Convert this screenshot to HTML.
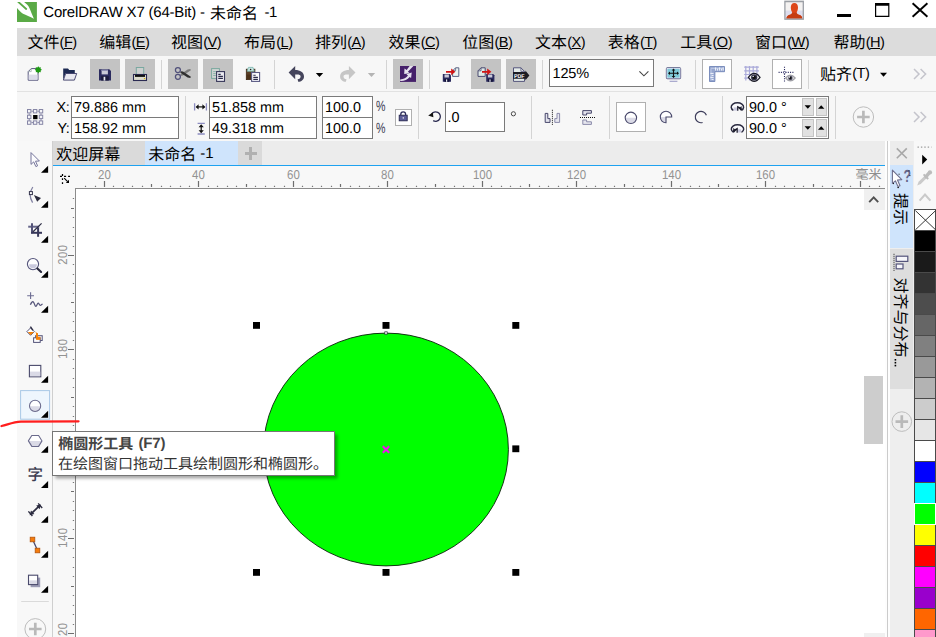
<!DOCTYPE html><html lang="zh"><head><meta charset="utf-8"><title>CorelDRAW X7 (64-Bit)</title>
<style>
html,body{margin:0;padding:0;background:#fff;}
body{width:936px;height:637px;overflow:hidden;position:relative;
 font-family:"Liberation Sans",sans-serif;text-rendering:geometricPrecision;-webkit-font-smoothing:antialiased;}
#app{position:absolute;left:0;top:0;width:936px;height:637px;overflow:hidden;background:#fff;}
.a{position:absolute;}
.t{position:absolute;margin-top:0.9px;white-space:pre;line-height:1.15;font-family:"Liberation Sans",sans-serif;}
.t u{text-decoration:underline;text-underline-offset:1px;text-decoration-thickness:1px;}
svg{position:absolute;left:0;top:0;overflow:visible;text-rendering:geometricPrecision;}
.h{position:absolute;white-space:pre;line-height:1;color:transparent;font-family:"Liberation Sans",sans-serif;overflow:hidden;max-width:300px;max-height:120px;}
svg.cjk text{font-family:"Liberation Sans","Noto Sans CJK SC",sans-serif;}
</style></head><body><div id="app">
<span class="t " style="left:43.3px;top:2.7px;font-size:15px;color:#000;letter-spacing:-0.2px;">CorelDRAW X7 (64-Bit) -</span>
<span class="t " style="left:264.6px;top:2.7px;font-size:15px;color:#000;letter-spacing:-0.5px;">-1</span>
<div class="a " style="left:17px;top:28px;width:919px;height:28px;background:#dcdcdc;"></div>
<span class="t " style="left:59.6px;top:33.8px;font-size:14.6px;color:#000;letter-spacing:-0.55px;">(<u>F</u>)</span>
<span class="t " style="left:131.4px;top:33.8px;font-size:14.6px;color:#000;letter-spacing:-0.55px;">(<u>E</u>)</span>
<span class="t " style="left:203.2px;top:33.8px;font-size:14.6px;color:#000;letter-spacing:-0.55px;">(<u>V</u>)</span>
<span class="t " style="left:276.3px;top:33.8px;font-size:14.6px;color:#000;letter-spacing:-0.55px;">(<u>L</u>)</span>
<span class="t " style="left:347.3px;top:33.8px;font-size:14.6px;color:#000;letter-spacing:-0.55px;">(<u>A</u>)</span>
<span class="t " style="left:420.7px;top:33.8px;font-size:14.6px;color:#000;letter-spacing:-0.55px;">(<u>C</u>)</span>
<span class="t " style="left:494.5px;top:33.8px;font-size:14.6px;color:#000;letter-spacing:-0.55px;">(<u>B</u>)</span>
<span class="t " style="left:567.3px;top:33.8px;font-size:14.6px;color:#000;letter-spacing:-0.55px;">(<u>X</u>)</span>
<span class="t " style="left:639.9px;top:33.8px;font-size:14.6px;color:#000;letter-spacing:-0.55px;">(<u>T</u>)</span>
<span class="t " style="left:712.5px;top:33.8px;font-size:14.6px;color:#000;letter-spacing:-0.55px;">(<u>O</u>)</span>
<span class="t " style="left:787.3px;top:33.8px;font-size:14.6px;color:#000;letter-spacing:-0.55px;">(<u>W</u>)</span>
<span class="t " style="left:865.8px;top:33.8px;font-size:14.6px;color:#000;letter-spacing:-0.55px;">(<u>H</u>)</span>
<div class="a " style="left:17px;top:56px;width:919px;height:35.5px;background:#f7f7f7;"></div>
<div class="a " style="left:17px;top:91px;width:919px;height:1px;background:#e2e2e2;"></div>
<div class="a " style="left:90px;top:59px;width:30px;height:30px;background:#c3c3c3;"></div>
<div class="a " style="left:125px;top:59px;width:30px;height:30px;background:#c3c3c3;"></div>
<div class="a " style="left:168px;top:59px;width:30px;height:30px;background:#c3c3c3;"></div>
<div class="a " style="left:203px;top:59px;width:30px;height:30px;background:#c3c3c3;"></div>
<div class="a " style="left:393px;top:59px;width:30px;height:30px;background:#c3c3c3;"></div>
<div class="a " style="left:471px;top:59px;width:30px;height:30px;background:#c3c3c3;"></div>
<div class="a " style="left:506px;top:59px;width:30px;height:30px;background:#c3c3c3;"></div>
<div class="a " style="left:161px;top:60px;width:1px;height:29px;background:#d4d4d4;"></div>
<div class="a " style="left:273.8px;top:60px;width:1px;height:29px;background:#d4d4d4;"></div>
<div class="a " style="left:386.2px;top:60px;width:1px;height:29px;background:#d4d4d4;"></div>
<div class="a " style="left:428.9px;top:60px;width:1px;height:29px;background:#d4d4d4;"></div>
<div class="a " style="left:541.8px;top:60px;width:1px;height:29px;background:#d4d4d4;"></div>
<div class="a " style="left:694.9px;top:60px;width:1px;height:29px;background:#d4d4d4;"></div>
<div class="a " style="left:807.9px;top:60px;width:1px;height:29px;background:#d4d4d4;"></div>
<div class="a " style="left:549px;top:59px;width:105px;height:28px;background:#fff;border:1px solid #7a7a7a;box-sizing:border-box;"></div>
<span class="t " style="left:552.6px;top:65.2px;font-size:14.5px;color:#000;letter-spacing:-0.2px;">125%</span>
<div class="a " style="left:702px;top:59px;width:30px;height:29.5px;background:#fff;border:1px solid #b0b0b0;box-sizing:border-box;"></div>
<div class="a " style="left:772px;top:59px;width:30px;height:29.5px;background:#fff;border:1px solid #b0b0b0;box-sizing:border-box;"></div>
<span class="t " style="left:852.3px;top:65.6px;font-size:14.6px;color:#000;letter-spacing:-0.55px;">(T)</span>
<div class="a " style="left:17px;top:92px;width:919px;height:49px;background:#f7f7f7;"></div>
<div class="a " style="left:184.9px;top:96px;width:1px;height:43px;background:#d4d4d4;"></div>
<div class="a " style="left:418px;top:96px;width:1px;height:43px;background:#d4d4d4;"></div>
<div class="a " style="left:531.2px;top:96px;width:1px;height:43px;background:#d4d4d4;"></div>
<div class="a " style="left:608.8px;top:96px;width:1px;height:43px;background:#d4d4d4;"></div>
<div class="a " style="left:721.9px;top:96px;width:1px;height:43px;background:#d4d4d4;"></div>
<div class="a " style="left:835.1px;top:96px;width:1px;height:43px;background:#d4d4d4;"></div>
<span class="t " style="left:56.6px;top:99.3px;font-size:14.4px;color:#000;letter-spacing:-0.4px;">X:</span>
<span class="t " style="left:57.4px;top:120.3px;font-size:14.4px;color:#000;letter-spacing:-0.4px;">Y:</span>
<div class="a " style="left:71px;top:96px;width:108px;height:22px;background:#fff;border:1px solid #7a7a7a;box-sizing:border-box;"></div>
<span class="t " style="left:74.1px;top:99.3px;font-size:14.4px;color:#000;">79.886 mm</span>
<div class="a " style="left:71px;top:117px;width:108px;height:22px;background:#fff;border:1px solid #7a7a7a;box-sizing:border-box;"></div>
<span class="t " style="left:74.1px;top:120.3px;font-size:14.4px;color:#000;">158.92 mm</span>
<div class="a " style="left:209px;top:96px;width:108px;height:22px;background:#fff;border:1px solid #7a7a7a;box-sizing:border-box;"></div>
<span class="t " style="left:212.1px;top:99.3px;font-size:14.4px;color:#000;">51.858 mm</span>
<div class="a " style="left:209px;top:117px;width:108px;height:22px;background:#fff;border:1px solid #7a7a7a;box-sizing:border-box;"></div>
<span class="t " style="left:212.1px;top:120.3px;font-size:14.4px;color:#000;">49.318 mm</span>
<div class="a " style="left:322px;top:96px;width:51px;height:22px;background:#fff;border:1px solid #7a7a7a;box-sizing:border-box;"></div>
<span class="t " style="left:325.1px;top:99.3px;font-size:14.4px;color:#000;">100.0</span>
<div class="a " style="left:322px;top:117px;width:51px;height:22px;background:#fff;border:1px solid #7a7a7a;box-sizing:border-box;"></div>
<span class="t " style="left:325.1px;top:120.3px;font-size:14.4px;color:#000;">100.0</span>
<span class="t " style="left:376.3px;top:98.3px;font-size:14.8px;color:#3a3a50;transform:scaleX(0.72);transform-origin:0 0;">%</span>
<span class="t " style="left:376.3px;top:120.3px;font-size:14.8px;color:#3a3a50;transform:scaleX(0.72);transform-origin:0 0;">%</span>
<div class="a " style="left:395px;top:109px;width:17px;height:17px;background:#fff;border:1px solid #b0b0b0;box-sizing:border-box;"></div>
<div class="a " style="left:445px;top:102px;width:60px;height:30px;background:#fff;border:1px solid #7a7a7a;box-sizing:border-box;"></div>
<span class="t " style="left:447.4px;top:109.4px;font-size:14.4px;color:#000;">.0</span>
<div class="a " style="left:616px;top:102px;width:30px;height:30px;background:#fff;border:1px solid #b0b0b0;box-sizing:border-box;"></div>
<div class="a " style="left:746px;top:96px;width:83px;height:22px;background:#fff;border:1px solid #7a7a7a;box-sizing:border-box;"></div>
<span class="t " style="left:749.1px;top:99.3px;font-size:14.4px;color:#000;">90.0 °</span>
<div class="a " style="left:746px;top:117px;width:83px;height:22px;background:#fff;border:1px solid #7a7a7a;box-sizing:border-box;"></div>
<span class="t " style="left:749.1px;top:120.3px;font-size:14.4px;color:#000;">90.0 °</span>
<div class="a " style="left:802px;top:98px;width:11.5px;height:18px;background:#e1e1e1;border:1px solid #c4c4c4;box-sizing:border-box;"></div>
<div class="a " style="left:815.5px;top:98px;width:11.5px;height:18px;background:#e1e1e1;border:1px solid #c4c4c4;box-sizing:border-box;"></div>
<div class="a " style="left:802px;top:119px;width:11.5px;height:18px;background:#e1e1e1;border:1px solid #c4c4c4;box-sizing:border-box;"></div>
<div class="a " style="left:815.5px;top:119px;width:11.5px;height:18px;background:#e1e1e1;border:1px solid #c4c4c4;box-sizing:border-box;"></div>
<div class="a " style="left:17px;top:141px;width:35.5px;height:496px;background:#f8f8f8;"></div>
<div class="a " style="left:52px;top:141px;width:1px;height:496px;background:#cfcfcf;"></div>
<div class="a " style="left:53px;top:141px;width:832px;height:24px;background:#ececec;"></div>
<div class="a " style="left:53px;top:141px;width:91.5px;height:24px;background:#dadada;"></div>
<div class="a " style="left:144.5px;top:141px;width:93.5px;height:24px;background:#cfe4fc;"></div>
<div class="a " style="left:238px;top:141px;width:23.5px;height:24px;background:#dadada;"></div>
<span class="t " style="left:200.2px;top:144.3px;font-size:15px;color:#000;">-1</span>
<div class="a " style="left:244.5px;top:152px;width:12.5px;height:2.6px;background:#b0b0b0;"></div>
<div class="a " style="left:249.4px;top:147px;width:2.6px;height:12.5px;background:#b0b0b0;"></div>
<div class="a " style="left:53px;top:165.5px;width:832px;height:22.7px;background:#f8f8f8;"></div>
<div class="a " style="left:53px;top:188px;width:22.5px;height:449px;background:#f8f8f8;"></div>
<div class="a " style="left:53px;top:164.8px;width:832px;height:1.4px;background:#1ea2f0;"></div>
<div class="a " style="left:75px;top:188px;width:789px;height:449px;background:#fff;"></div>
<div class="a " style="left:75px;top:187.9px;width:810px;height:1.2px;background:#8c8c8c;"></div>
<div class="a " style="left:75px;top:188px;width:1px;height:449px;background:#8c8c8c;"></div>
<div class="a " style="left:864px;top:189px;width:20.5px;height:448px;background:#fff;"></div>
<div class="a " style="left:864px;top:189px;width:20.5px;height:20.5px;background:#f0f0f0;"></div>
<div class="a " style="left:864px;top:376px;width:19px;height:67.5px;background:#cdcdcd;"></div>
<div class="a " style="left:864px;top:633px;width:20.5px;height:4px;background:#f0f0f0;"></div>
<div class="a " style="left:885px;top:141px;width:51px;height:496px;background:#f8f8f8;"></div>
<div class="a " style="left:885px;top:141px;width:5px;height:496px;background:#fdfdfd;"></div>
<div class="a " style="left:887px;top:141px;width:1px;height:496px;background:#cbcbcb;"></div>
<div class="a " style="left:890px;top:141px;width:24px;height:496px;background:#eeeeee;"></div>
<div class="a " style="left:890px;top:141px;width:23px;height:24px;background:#ececec;"></div>
<div class="a " style="left:890px;top:165px;width:23px;height:83px;background:#cfe4fc;"></div>
<div class="a " style="left:890px;top:248.5px;width:23px;height:140px;background:#dedede;"></div>
<div class="a " style="left:914px;top:209px;width:22px;height:428px;background:#4a4a4a;"></div>
<div class="a " style="left:915.1px;top:210.3px;width:19.9px;height:20px;background:#fff;"></div>
<div class="a " style="left:915.1px;top:231.3px;width:19.9px;height:20px;background:#000000;"></div>
<div class="a " style="left:915.1px;top:252.3px;width:19.9px;height:20px;background:#1a1a1a;"></div>
<div class="a " style="left:915.1px;top:273.3px;width:19.9px;height:20px;background:#333333;"></div>
<div class="a " style="left:915.1px;top:294.3px;width:19.9px;height:20px;background:#4d4d4d;"></div>
<div class="a " style="left:915.1px;top:315.3px;width:19.9px;height:20px;background:#666666;"></div>
<div class="a " style="left:915.1px;top:336.3px;width:19.9px;height:20px;background:#808080;"></div>
<div class="a " style="left:915.1px;top:357.3px;width:19.9px;height:20px;background:#999999;"></div>
<div class="a " style="left:915.1px;top:378.3px;width:19.9px;height:20px;background:#b3b3b3;"></div>
<div class="a " style="left:915.1px;top:399.3px;width:19.9px;height:20px;background:#cccccc;"></div>
<div class="a " style="left:915.1px;top:420.3px;width:19.9px;height:20px;background:#e6e6e6;"></div>
<div class="a " style="left:915.1px;top:441.3px;width:19.9px;height:20px;background:#ffffff;"></div>
<div class="a " style="left:915.1px;top:462.3px;width:19.9px;height:20px;background:#0000ff;"></div>
<div class="a " style="left:915.1px;top:483.3px;width:19.9px;height:20px;background:#00ffff;"></div>
<div class="a " style="left:915.1px;top:504.3px;width:19.9px;height:20px;background:#00ff00;"></div>
<div class="a " style="left:913.8px;top:503.3px;width:22.2px;height:21.6px;box-sizing:border-box;border:1.3px solid #fff;"></div>
<div class="a " style="left:915.1px;top:525.3px;width:19.9px;height:20px;background:#ffff00;"></div>
<div class="a " style="left:915.1px;top:546.3px;width:19.9px;height:20px;background:#ff0000;"></div>
<div class="a " style="left:915.1px;top:567.3px;width:19.9px;height:20px;background:#ff00ff;"></div>
<div class="a " style="left:915.1px;top:588.3px;width:19.9px;height:20px;background:#9900cc;"></div>
<div class="a " style="left:915.1px;top:609.3px;width:19.9px;height:20px;background:#ff6600;"></div>
<div class="a " style="left:915.1px;top:630.3px;width:19.9px;height:20px;background:#ff99cc;"></div>
<svg width="936" height="637" viewBox="0 0 936 637"><svg x="17" y="2" width="19.9" height="20" overflow="hidden" style="overflow:hidden"><rect width="19.9" height="20" fill="#5aaa46"/><path d="M0 0 L7.1 0 C9.6 1.8 11.4 3.8 12.4 5.9 C13.6 8.6 15.2 12.6 16.9 16.8 C13 14.8 9 13.2 6 11.8 C3.6 10.2 1.8 8.2 0 6.1z" fill="#fff"/><path d="M1.2 -0.2 L9.2 7" stroke="#5aaa46" stroke-width="1.8" stroke-linecap="round"/></svg>
<rect x="784.9" y="1.6" width="18.4" height="17.6" fill="#f4f2f1"/><rect x="784.9" y="10.5" width="18.4" height="8.7" fill="#dddded"/><path d="M794.4 3 C796.8 3 798 5 798 7.4 C798 9.6 797.2 11.4 796.6 12.2 C796.6 13.6 797.4 14.2 799 14.8 C800.8 15.4 802 16.4 802.4 18.4 L786.4 18.4 C786.8 16.4 788 15.4 789.8 14.8 C791.4 14.2 792.2 13.6 792.2 12.2 C791.6 11.4 790.8 9.6 790.8 7.4 C790.8 5 792 3 794.4 3z" fill="#dd4719"/><path d="M792.2 12.2 C792.2 13.6 791.4 14.2 789.8 14.8 C788 15.4 786.8 16.4 786.4 18.4 L802.4 18.4 C802 16.4 800.8 15.4 799 14.8 C797.4 14.2 796.6 13.6 796.6 12.2 C795.4 13 793.4 13 792.2 12.2z" fill="#c53d12"/><rect x="784.9" y="1.6" width="18.4" height="17.6" fill="none" stroke="#9b9fa5" stroke-width="1.3"/><rect x="784.3" y="0" width="19.6" height="1" fill="#dadbdc"/>
<rect x="837" y="14" width="14" height="3" fill="#000"/><path d="M875 3 h14.4 v14 h-14.4z M876.2 5.8 v10 h12 v-10z" fill="#000" fill-rule="evenodd"/><path d="M912.6 3.2 L927.4 16.8 M927.4 3.2 L912.6 16.8" stroke="#000" stroke-width="1.9" fill="none"/>
<path d="M31.2 68.6 h6.8 v11.6 h-9.8 v-8.6z" fill="#fff" stroke="#55557c" stroke-width="1"/><path d="M28.7 74.6 h8.8 v5.1 h-8.8z" fill="#dcdce9"/><path d="M31.2 68.6 v3 h-3" fill="none" stroke="#9aa" stroke-width="0.8"/><path d="M38.3 66.3 L38.30 66.20 L39.26 67.49 L40.85 67.25 L40.61 68.84 L41.90 69.80 L40.61 70.76 L40.85 72.35 L39.26 72.11 L38.30 73.40 L37.34 72.11 L35.75 72.35 L35.99 70.76 L34.70 69.80 L35.99 68.84 L35.75 67.25 L37.34 67.49z" fill="#1f9a14"/><path d="M63.2 80 v-11.6 h4.8 l1.2 1.7 h5.6 v3.6 h-9.4z" fill="#1d2a52"/><path d="M63.4 80.1 l2.3 -6.6 h11 l-2.3 6.6z" fill="#e9e9f1" stroke="#3a3a66" stroke-width="0.9"/><g transform="translate(99 69.2)" transform-origin="0 0"><path d="M0 0 h10.3 l1.7 1.7 v9.7 h-12z" fill="#2a2a5e"/><rect x="2.6" y="0.6" width="6.3" height="4.6" fill="#c9c9d8"/><rect x="2.6" y="0.6" width="6.3" height="1.2" fill="#8d8db2"/><rect x="2.2" y="7" width="7.6" height="4.4" fill="#1b1b3c"/><rect x="4.6" y="7.6" width="1.7" height="3.8" fill="#e8e8f0"/></g><rect x="136.3" y="67.5" width="7.4" height="7.6" fill="#cdcfce" stroke="#7aa8a0"/><rect x="133.5" y="74.5" width="13" height="6" fill="#dcdccd" stroke="#2a2a52" stroke-width="1.1"/><rect x="135" y="74.9" width="10" height="2" fill="#111"/><rect x="143.9" y="78" width="1.3" height="1.1" fill="#d8b000"/><path d="M180.4 74.4 L187.6 69.6 L190.3 69 L190.9 70.2 L183 75.6 L180.6 75.9z" fill="#7c7c7c"/><path d="M180.6 71.2 L183 71.5 L190.9 76.7 L190.3 77.9 L187.6 77.6 L180.4 72.8z" fill="#303030"/><circle cx="177.9" cy="70" r="2.5" fill="none" stroke="#50507a" stroke-width="1.25"/><circle cx="177.9" cy="76.8" r="2.5" fill="none" stroke="#50507a" stroke-width="1.25"/><rect x="211.6" y="68.6" width="7.8" height="9.8" fill="#d2d4d3" stroke="#7aa89e"/><path d="M213.2 71.6 h2.6 M213.2 73.6 h2.6 M213.2 75.5 h2.6" stroke="#86b2a8" stroke-width="1"/><rect x="216.6" y="71.6" width="7.9" height="9.8" fill="#ececf2" stroke="#38385a" stroke-width="1.1"/><path d="M218.3 74.3 h2.4 M218.3 76.4 h4.6 M218.3 78.4 h4.6" stroke="#2a2a48" stroke-width="1.15"/><rect x="246.3" y="69.2" width="8.6" height="10.4" fill="#5b3f27" stroke="#3e2815" stroke-width="0.8"/><rect x="246.7" y="74.6" width="7.8" height="4.6" fill="#4c3119"/><path d="M247.2 71.2 L248.4 67.4 L253 67.4 L254.2 71.2z" fill="#c9e6e2" stroke="#7ab6ae" stroke-width="0.8"/><circle cx="250.6" cy="69.5" r="0.8" fill="#222"/><rect x="251.6" y="72.5" width="8" height="8.9" fill="#fdfdff" stroke="#5a5a84" stroke-width="1.1"/><path d="M253.3 75.2 h2.4 M253.3 77.3 h4.6 M253.3 79.3 h4.6" stroke="#2a2a48" stroke-width="1.15"/><g transform="translate(288.6 66)" ><path d="M0 6.6 L6.6 0 L6.6 4 C11.5 4 15.4 6.4 15.4 10.4 C15.4 13.6 12.8 15.6 9.6 15.7 L9 13.3 C10.9 13.1 12 12.1 12 10.5 C12 8.8 10.2 8.4 6.6 8.6 L6.6 13.2z" fill="#45455c"/></g><path d="M315.8 72.9 h7.4 l-3.7 4.2 z" fill="#000"/><g transform="translate(695.9 0) scale(-1 1)"><g transform="translate(340.4 66)" ><path d="M0 6.6 L6.6 0 L6.6 4 C11.5 4 15.4 6.4 15.4 10.4 C15.4 13.6 12.8 15.6 9.6 15.7 L9 13.3 C10.9 13.1 12 12.1 12 10.5 C12 8.8 10.2 8.4 6.6 8.6 L6.6 13.2z" fill="#c6c6c6"/></g></g><path d="M367.8 72.9 h7.4 l-3.7 4.2 z" fill="#b4b4b4"/><rect x="400" y="66" width="16" height="15.9" fill="#45206a"/><path d="M413.4 66 L409.6 66 L406.7 70.1 L404.5 68.4 L404.2 74 L409.8 73.2 L407.9 71.7z" fill="#e6e2ee"/><path d="M400.2 79.4 C403.8 79.2 406.4 77.8 408 75.6 L406.4 74.3 L411.7 72.6 L411.1 78.1 L409.6 76.9 C407.4 79.9 403.6 81.2 400.2 80.9z" fill="#e6e2ee"/><path d="M455.6 67.8 h3.2 v8.6 h-6.2 v-5.6 z" fill="#eaf4f2" stroke="#5c6484" stroke-width="1"/><path d="M455.6 67.8 v3 h-3" fill="none" stroke="#5c6484" stroke-width="0.8"/><g transform="translate(442.8 74)" ><path d="M0 0 h7 l1.2 1.2 v6.6 h-8.2z" fill="#2a2a5e"/><rect x="1.7" y="0.5" width="4.4" height="3" fill="#c9c9d8"/><rect x="1.6" y="4.9" width="5" height="2.9" fill="#15153a"/><rect x="3.2" y="5.4" width="1.2" height="2.4" fill="#e8e8f0"/></g><path d="M446 70.9 h5.2 v-2.5 l4.2 3.4 l-4.2 3.4 v-2.5 h-5.2 z" fill="#d01414"/><path d="M481 67.8 h4.2 v8.6 h-7.2 v-5.6 z" fill="#dfe9e7" stroke="#4a4a70" stroke-width="1"/><path d="M481 67.8 v3 h-3" fill="none" stroke="#4a4a70" stroke-width="0.8"/><g transform="translate(486.2 74)" ><path d="M0 0 h7 l1.2 1.2 v6.6 h-8.2z" fill="#2a2a5e"/><rect x="1.7" y="0.5" width="4.4" height="3" fill="#c9c9d8"/><rect x="1.6" y="4.9" width="5" height="2.9" fill="#15153a"/><rect x="3.2" y="5.4" width="1.2" height="2.4" fill="#e8e8f0"/></g><path d="M482 70.9 h5.2 v-2.5 l4.2 3.4 l-4.2 3.4 v-2.5 h-5.2 z" fill="#d01414"/><path d="M513.5 67.8 h7.4 l3.6 3.6 v10 h-11z" fill="#e4ebe9" stroke="#55557c" stroke-width="1"/><path d="M520.9 67.8 v3.6 h3.6" fill="none" stroke="#55557c" stroke-width="0.8"/><path d="M513 72 h12.4 v-1.4 l4 4.8 l-4 4.8 v-1.4 h-12.4z" fill="#1c1c24"/><text x="514" y="78" font-family="Liberation Sans,sans-serif" font-size="5.6" font-weight="bold" fill="#fff" textLength="10.6" lengthAdjust="spacingAndGlyphs">PDF</text><path d="M639.4 71.3 L643.9 75.8 L648.4 71.3" fill="none" stroke="#444" stroke-width="1.1"/><rect x="666.4" y="67.8" width="14.2" height="10.8" rx="1" fill="#7ec9d8" stroke="#5a5a82" stroke-width="1.1"/><rect x="667" y="68.4" width="13" height="9.6" fill="none" stroke="#eef" stroke-width="0.7"/><path d="M669.6 81.3 h7.8" stroke="#9d9dc8" stroke-width="1.1"/><path d="M673.5 69.2 v8 M669 73.2 h9" stroke="#111" stroke-width="1.1"/><path d="M673.5 68.4 l1.8 2 h-3.6z M673.5 78 l1.8 -2 h-3.6z M668 73.2 l2 -1.8 v3.6z M679 73.2 l-2 -1.8 v3.6z" fill="#111"/><path d="M709.5 66.5 h15 v5.2 h-9.6 v9.8 h-5.4z" fill="#97a7d0" stroke="#7286b8" stroke-width="0.9"/><path d="M711 68.4 h12 M711 68.4 v11.6" stroke="#b9c5e2" stroke-width="1.1" fill="none"/><path d="M715.6 67.4 v3.2 M717.6 68.6 v2 M719.6 67.4 v3.2 M721.6 68.6 v2 M723.2 67.4 v3.2 M710.4 73.4 h3.2 M711.6 75.4 h2 M710.4 77.4 h3.2 M711.6 79.4 h2" stroke="#f2f5fb" stroke-width="1"/><path d="M745.8 65.9 v14.7 M749.5 65.9 v14.7 M753.2 65.9 v14.7 M756.9 65.9 v14.7 M744.2 67.1 h14.7 M744.2 70.8 h14.7 M744.2 74.5 h14.7 M744.2 78.2 h14.7 " stroke="#a9a9d9" stroke-width="1.2" fill="none"/><path d="M748.4 77.4 Q754.2 69.4 760 77.4 Q754.2 85.4 748.4 77.4 z" fill="#f2f2f2" stroke="#1c1c28" stroke-width="1.3"/><circle cx="754.2" cy="77.4" r="3.12" fill="#34344a"/><circle cx="754.2" cy="77.4" r="1.68" fill="#111"/><circle cx="753.2" cy="76.4" r="0.7" fill="#fff"/><path d="M784.5 66.8 v15.4 M778.6 72.4 h15.6" stroke="#22225a" stroke-width="1.1" stroke-dasharray="1 1.3" fill="none"/><circle cx="784.5" cy="72.4" r="1.1" fill="#fff" stroke="#22225a" stroke-width="0.6"/><path d="M785.7 78 Q790.4 72.2 795.1 78 Q790.4 83.8 785.7 78 z" fill="#f2f2f2" stroke="#a2a2a8" stroke-width="1.3"/><circle cx="790.4" cy="78" r="2.262" fill="#55556a"/><circle cx="790.4" cy="78" r="1.218" fill="#111"/><circle cx="789.4" cy="77" r="0.7" fill="#fff"/><path d="M880 72.8 h7 l-3.5 4 z" fill="#000"/><path d="M914 69 l5 5 l-5 5 M920.6 69 l5 5 l-5 5" fill="none" stroke="#c4c4cc" stroke-width="1.5"/><path d="M914 112 l5 5 l-5 5 M920.6 112 l5 5 l-5 5" fill="none" stroke="#c4c4cc" stroke-width="1.5"/>
<rect x="27.5" y="109.5" width="3.4" height="3.4" fill="#f4f4f8" stroke="#8686a6" stroke-width="1"/><rect x="33.4" y="109.5" width="3.4" height="3.4" fill="#f4f4f8" stroke="#8686a6" stroke-width="1"/><rect x="39.3" y="109.5" width="3.4" height="3.4" fill="#f4f4f8" stroke="#8686a6" stroke-width="1"/><rect x="27.5" y="115.2" width="3.4" height="3.4" fill="#f4f4f8" stroke="#8686a6" stroke-width="1"/><rect x="33.1" y="115" width="4.4" height="4.2" fill="#000"/><rect x="39.3" y="115.2" width="3.4" height="3.4" fill="#f4f4f8" stroke="#8686a6" stroke-width="1"/><rect x="27.5" y="120.9" width="3.4" height="3.4" fill="#f4f4f8" stroke="#8686a6" stroke-width="1"/><rect x="33.4" y="120.9" width="3.4" height="3.4" fill="#f4f4f8" stroke="#8686a6" stroke-width="1"/><rect x="39.3" y="120.9" width="3.4" height="3.4" fill="#f4f4f8" stroke="#8686a6" stroke-width="1"/><path d="M31.4 111.2 h2 M37.3 111.2 h2 M31.4 122.6 h2 M37.3 122.6 h2 M29.2 113.4 v1.8 M29.2 119 v1.8 M41 113.4 v1.8 M41 119 v1.8" stroke="#8686a6" stroke-width="1"/><path d="M194.6 103.2 v7.4 M206.4 103.2 v7.4" stroke="#8c8cc0" stroke-width="1.3"/><path d="M196.6 106.9 h7.8" stroke="#111" stroke-width="1.2"/><path d="M195.6 106.9 l3 -2.6 v5.2z M205.4 106.9 l-3 -2.6 v5.2z" fill="#111"/><path d="M197.6 123.4 h7.2 M197.6 134 h7.2" stroke="#8c8cc0" stroke-width="1.3"/><path d="M201.2 125.4 v6.8" stroke="#111" stroke-width="1.2"/><path d="M201.2 124.2 l2.6 3 h-5.2z M201.2 133.2 l2.6 -3 h-5.2z" fill="#111"/><path d="M400.8 115.4 v-1.2 a2.4 2.4 0 0 1 4.8 0 v1.2" fill="none" stroke="#2e2e5c" stroke-width="1.3"/><rect x="399.2" y="115.2" width="8" height="5.6" fill="#5c5c98" stroke="#26264e" stroke-width="0.9"/><rect x="402.7" y="117.2" width="1.1" height="1.4" fill="#fff"/><path d="M431.4 114.6 A4.7 4.7 0 1 1 433.2 120.6" fill="none" stroke="#2b2b50" stroke-width="1.3"/><path d="M428.2 115.6 l4.6 -3 l0.6 4.6z" fill="#111"/><circle cx="513.4" cy="113.8" r="2.1" fill="none" stroke="#4a4a4a" stroke-width="1"/><path d="M545.2 113.4 h2.6 v5.2 h2.2 v3.8 h-4.8z" fill="#e2e2ec" stroke="#46466a" stroke-width="1"/><path d="M559.6 113.4 h-2.6 v5.2 h-2.2 v3.8 h4.8z" fill="#e6e6ee" stroke="#8a8aaa" stroke-width="1"/><path d="M552.4 109.8 v15.2" stroke="#111" stroke-width="1" stroke-dasharray="1 1"/><path d="M582.8 110.6 h8.6 v2.6 h-4.8 v1.8 h-3.8z" fill="#e2e2ec" stroke="#46466a" stroke-width="1"/><path d="M582.8 124.4 h8.6 v-2.6 h-4.8 v-1.8 h-3.8z" fill="#e6e6ee" stroke="#8a8aaa" stroke-width="1"/><path d="M580 117.5 h15" stroke="#111" stroke-width="1" stroke-dasharray="1 1"/><circle cx="630.9" cy="117.8" r="5.7" fill="#fff"/><path d="M625.2 117.8 a5.7 5.7 0 0 0 11.4 0z" fill="#dadae6"/><circle cx="630.9" cy="117.8" r="5.7" fill="none" stroke="#4a4a6c" stroke-width="1.1"/><path d="M666 117 h5.7 a5.7 5.7 0 1 0 -5.7 5.7z" fill="#fff"/><path d="M660.3 117 a5.7 5.7 0 0 0 5.7 5.7 v-5.7z" fill="#dadae6"/><path d="M666 117 h5.7 a5.7 5.7 0 1 0 -5.7 5.7z" fill="none" stroke="#4a4a6c" stroke-width="1.1"/><path d="M706.4 115.2 A5.7 5.7 0 1 0 702.6 122.5" fill="none" stroke="#3c3c5a" stroke-width="1.2"/><g transform="translate(730.8 102.1)"><path d="M2.6 8.3 A6.2 4.3 0 1 1 10.6 8.3" fill="#fbfbfd" stroke="#2a2a40" stroke-width="1.45"/><rect x="2.9" y="5.3" width="3.6" height="3.2" fill="#c9c9de"/><path d="M6.3 3.6 L6.3 8.7 L7.6 8.7 L7.6 6 L10.2 8.7 L11.2 7.6 L10.6 3.8 L9.4 5.2z" fill="#1c1c2c"/></g><g transform="translate(744.1 124) scale(-1 1)"><path d="M2.6 8.3 A6.2 4.3 0 1 1 10.6 8.3" fill="#fbfbfd" stroke="#2a2a40" stroke-width="1.45"/><rect x="2.9" y="5.3" width="3.6" height="3.2" fill="#c9c9de"/><path d="M6.3 3.6 L6.3 8.7 L7.6 8.7 L7.6 6 L10.2 8.7 L11.2 7.6 L10.6 3.8 L9.4 5.2z" fill="#1c1c2c"/></g><path d="M804.6 105.2 h6.4 l-3.2 3.6 z" fill="#000"/><path d="M818 108.8 h6.4 l-3.2 -3.6z" fill="#000"/><path d="M804.6 126.2 h6.4 l-3.2 3.6 z" fill="#000"/><path d="M818 129.8 h6.4 l-3.2 -3.6z" fill="#000"/><circle cx="863.4" cy="117" r="10.2" fill="none" stroke="#bdbdbd" stroke-width="1"/><path d="M857.1 117 h12.6 M863.4 110.7 v12.6" stroke="#b9b9b9" stroke-width="2.7"/>
<path d="M48.1 165.8 v7 h-7.1z" fill="#000"/><path d="M48.1 200.8 v7 h-7.1z" fill="#000"/><path d="M48.1 235.8 v7 h-7.1z" fill="#000"/><path d="M48.1 270.8 v7 h-7.1z" fill="#000"/><path d="M48.1 305.8 v7 h-7.1z" fill="#000"/><path d="M48.1 375.8 v7 h-7.1z" fill="#000"/><path d="M48.1 410.8 v7 h-7.1z" fill="#000"/><path d="M48.1 445.8 v7 h-7.1z" fill="#000"/><path d="M48.1 481.1 v7 h-7.1z" fill="#000"/><path d="M48.1 515.8 v7 h-7.1z" fill="#000"/><path d="M48.1 550.8 v7 h-7.1z" fill="#000"/><path d="M48.1 585.8 v7 h-7.1z" fill="#000"/><path d="M31 152.6 L31 164.4 L33.7 161.9 L35.9 166.6 L37.6 165.8 L35.5 161.2 L39.4 161z" fill="#fbfbfd" stroke="#74749a" stroke-width="1" stroke-linejoin="round"/><path d="M32.8 187 C29.6 191.8 29.6 197.8 32.6 202.6" fill="none" stroke="#8484a4" stroke-width="1.3"/><rect x="29.4" y="191.6" width="3" height="3" fill="#fff" stroke="#33334c" stroke-width="1"/><path d="M33.9 195 L41 198.1 L37.2 201.7z" fill="#2a2a3c"/><path d="M28.2 226.7 h11" stroke="#66668a" stroke-width="2"/><path d="M32 223.2 v10" stroke="#55557a" stroke-width="2"/><path d="M31 232.8 h11" stroke="#38385a" stroke-width="2"/><path d="M38.1 227.6 v9.2" stroke="#38385a" stroke-width="2"/><path d="M33 231.8 L41.6 223.4" stroke="#2c2c44" stroke-width="1.2"/><circle cx="33" cy="264.1" r="5.6" fill="#fdfdfe" stroke="#55557c" stroke-width="1.15"/><path d="M29.1 264.3 a3.9 3.9 0 0 0 7.8 0z" fill="#c9c9dd"/><path d="M37.4 268.4 L41.1 272" stroke="#2a2a3e" stroke-width="2.1" stroke-linecap="round"/><path d="M27.2 295.7 h6.8 M30.6 292.3 v6.8" stroke="#6c6c92" stroke-width="1.1"/><path d="M30.4 304.8 C31.4 302.4 32.4 301.4 33.2 301.8 C34.4 302.4 34.6 306.2 35.8 306.4 C36.8 306.6 37.2 303.2 38.2 303.2 C39 303.2 39.4 305.4 40.2 305.4 C41 305.4 41.6 304.4 42.6 304" fill="none" stroke="#55557a" stroke-width="1.3"/><rect x="35.6" y="335.7" width="6.6" height="4.8" fill="#fbfbfd" stroke="#55557a" stroke-width="1"/><rect x="33.6" y="337.8" width="6.6" height="4.6" fill="#fbfbfd" stroke="#55557a" stroke-width="1"/><path d="M35 331.4 L36.8 332.6 L36.8 339.6 L40.2 339.6 L40.2 336.8 L38 336.8 L38 333.4 L35.6 332.4z" fill="#f5820a"/><path d="M36 333 v6.8 h4.2 v-2.8 h-2.4 v-4z" fill="#f5820a"/><path d="M26.9 331.6 L30.6 327.9 L34.3 331.6 L30.6 335.3z" fill="#fff" stroke="#55557a" stroke-width="1"/><path d="M27.8 332 L34 332 L30.6 335z" fill="#f5820a"/><path d="M30.4 326.6 L33 330.4" stroke="#2c2c44" stroke-width="1.4"/><rect x="29.4" y="365.4" width="11.4" height="11.4" fill="#fff" stroke="#4a4a6c" stroke-width="1.1"/><rect x="30" y="371.6" width="10.2" height="4.6" fill="#dadae6"/><rect x="20.6" y="390.6" width="29" height="28.6" fill="#eef6fd" stroke="#a9c8e6" stroke-width="1"/><circle cx="35.1" cy="405.9" r="5.6" fill="#fff"/><path d="M29.5 406.2 a5.6 5.6 0 0 0 11.2 0z" fill="#dadae6"/><circle cx="35.1" cy="405.9" r="5.6" fill="none" stroke="#6a6a8c" stroke-width="1.05"/><path d="M48.1 410.8 v7 h-7.1z" fill="#000"/><path d="M28.4 440.9 L31.8 435.4 L38.6 435.4 L42 440.9 L38.6 446.4 L31.8 446.4z" fill="#fff"/><path d="M28.4 440.9 L42 440.9 L38.6 446.4 L31.8 446.4z" fill="#dadae6"/><path d="M28.4 440.9 L31.8 435.4 L38.6 435.4 L42 440.9 L38.6 446.4 L31.8 446.4z" fill="none" stroke="#6a6a8c" stroke-width="1.05"/><path d="M30.8 514.2 L39.8 505.4" stroke="#2c2c40" stroke-width="1.7"/><path d="M28.4 511.4 L32.4 516 M38.2 503.4 L42.2 508" stroke="#2c2c40" stroke-width="1.4"/><path d="M29.6 515.2 l4.8 -1.2 l-3.4 -3.6z M41 504.4 l-4.8 1.2 l3.4 3.6z" fill="#2c2c40"/><path d="M32.6 539.6 L37.6 550.6" stroke="#4a4a6c" stroke-width="1.3"/><rect x="30.2" y="537.2" width="4.6" height="4.6" fill="#f57c0c" stroke="#b4540a" stroke-width="0.8"/><rect x="35.2" y="548.2" width="4.6" height="4.6" fill="#f57c0c" stroke="#b4540a" stroke-width="0.8"/><rect x="30.6" y="577.6" width="9.6" height="9.6" fill="#8a8aa8" opacity="0.85"/><rect x="28.5" y="575.2" width="9.2" height="9.4" fill="#fff" stroke="#4a4a6c" stroke-width="1.1"/><rect x="29.1" y="580.4" width="8" height="3.6" fill="#dadae6"/><path d="M21.2 601.5 h27.6" stroke="#dadada" stroke-width="1"/><circle cx="35.3" cy="629" r="10.4" fill="none" stroke="#bdbdbd" stroke-width="1"/><path d="M29 629 h12.6 M35.3 622.7 v12.6" stroke="#b9b9b9" stroke-width="2.7"/>
<path d="M151.5 184 v3 M246.5 184 v3 M340.5 184 v3 M435.5 184 v3 M529.5 184 v3 M624.5 184 v3 M718.5 184 v3 M813.5 184 v3 M104.5 181 v6 M198.5 181 v6 M293.5 181 v6 M387.5 181 v6 M482.5 181 v6 M576.5 181 v6 M671.5 181 v6 M765.5 181 v6 M860.5 181 v6 " stroke="#6e6e6e" stroke-width="1.2" fill="none"/><path d="M85.5 185.8 v1.3 M95.5 185.8 v1.3 M113.5 185.8 v1.3 M123.5 185.8 v1.3 M132.5 185.8 v1.3 M142.5 185.8 v1.3 M161.5 185.8 v1.3 M170.5 185.8 v1.3 M180.5 185.8 v1.3 M189.5 185.8 v1.3 M208.5 185.8 v1.3 M217.5 185.8 v1.3 M227.5 185.8 v1.3 M236.5 185.8 v1.3 M255.5 185.8 v1.3 M265.5 185.8 v1.3 M274.5 185.8 v1.3 M284.5 185.8 v1.3 M302.5 185.8 v1.3 M312.5 185.8 v1.3 M321.5 185.8 v1.3 M331.5 185.8 v1.3 M350.5 185.8 v1.3 M359.5 185.8 v1.3 M369.5 185.8 v1.3 M378.5 185.8 v1.3 M397.5 185.8 v1.3 M406.5 185.8 v1.3 M416.5 185.8 v1.3 M425.5 185.8 v1.3 M444.5 185.8 v1.3 M454.5 185.8 v1.3 M463.5 185.8 v1.3 M473.5 185.8 v1.3 M491.5 185.8 v1.3 M501.5 185.8 v1.3 M510.5 185.8 v1.3 M520.5 185.8 v1.3 M539.5 185.8 v1.3 M548.5 185.8 v1.3 M558.5 185.8 v1.3 M567.5 185.8 v1.3 M586.5 185.8 v1.3 M595.5 185.8 v1.3 M605.5 185.8 v1.3 M614.5 185.8 v1.3 M633.5 185.8 v1.3 M643.5 185.8 v1.3 M652.5 185.8 v1.3 M661.5 185.8 v1.3 M680.5 185.8 v1.3 M690.5 185.8 v1.3 M699.5 185.8 v1.3 M709.5 185.8 v1.3 M728.5 185.8 v1.3 M737.5 185.8 v1.3 M747.5 185.8 v1.3 M756.5 185.8 v1.3 M775.5 185.8 v1.3 M784.5 185.8 v1.3 M794.5 185.8 v1.3 M803.5 185.8 v1.3 M822.5 185.8 v1.3 M832.5 185.8 v1.3 M841.5 185.8 v1.3 M850.5 185.8 v1.3 M869.5 185.8 v1.3 M879.5 185.8 v1.3 " stroke="#777" stroke-width="1.2" fill="none"/><text transform="translate(104.5 179) scale(0.89 1)" text-anchor="middle" font-family="Liberation Sans,sans-serif" font-size="12.9" fill="#929292">20</text><text transform="translate(198.5 179) scale(0.89 1)" text-anchor="middle" font-family="Liberation Sans,sans-serif" font-size="12.9" fill="#929292">40</text><text transform="translate(293.5 179) scale(0.89 1)" text-anchor="middle" font-family="Liberation Sans,sans-serif" font-size="12.9" fill="#929292">60</text><text transform="translate(387.5 179) scale(0.89 1)" text-anchor="middle" font-family="Liberation Sans,sans-serif" font-size="12.9" fill="#929292">80</text><text transform="translate(482.5 179) scale(0.89 1)" text-anchor="middle" font-family="Liberation Sans,sans-serif" font-size="12.9" fill="#929292">100</text><text transform="translate(576.5 179) scale(0.89 1)" text-anchor="middle" font-family="Liberation Sans,sans-serif" font-size="12.9" fill="#929292">120</text><text transform="translate(671.5 179) scale(0.89 1)" text-anchor="middle" font-family="Liberation Sans,sans-serif" font-size="12.9" fill="#929292">140</text><text transform="translate(765.5 179) scale(0.89 1)" text-anchor="middle" font-family="Liberation Sans,sans-serif" font-size="12.9" fill="#929292">160</text><path d="M71 208.5 h3 M71 302.5 h3 M71 397.5 h3 M71 491.5 h3 M71 586.5 h3 M68 255.5 h6 M68 349.5 h6 M68 444.5 h6 M68 538.5 h6 M68 633.5 h6 " stroke="#6e6e6e" stroke-width="1.2" fill="none"/><path d="M72.8 198.5 h1.3 M72.8 217.5 h1.3 M72.8 227.5 h1.3 M72.8 236.5 h1.3 M72.8 246.5 h1.3 M72.8 264.5 h1.3 M72.8 274.5 h1.3 M72.8 283.5 h1.3 M72.8 293.5 h1.3 M72.8 312.5 h1.3 M72.8 321.5 h1.3 M72.8 331.5 h1.3 M72.8 340.5 h1.3 M72.8 359.5 h1.3 M72.8 368.5 h1.3 M72.8 378.5 h1.3 M72.8 387.5 h1.3 M72.8 406.5 h1.3 M72.8 416.5 h1.3 M72.8 425.5 h1.3 M72.8 435.5 h1.3 M72.8 453.5 h1.3 M72.8 463.5 h1.3 M72.8 472.5 h1.3 M72.8 482.5 h1.3 M72.8 501.5 h1.3 M72.8 510.5 h1.3 M72.8 520.5 h1.3 M72.8 529.5 h1.3 M72.8 548.5 h1.3 M72.8 557.5 h1.3 M72.8 567.5 h1.3 M72.8 576.5 h1.3 M72.8 595.5 h1.3 M72.8 605.5 h1.3 M72.8 614.5 h1.3 M72.8 624.5 h1.3 " stroke="#777" stroke-width="1.2" fill="none"/><text transform="translate(67.1 254.6) rotate(-90) scale(0.88 1)" text-anchor="middle" letter-spacing="0.6" font-family="Liberation Sans,sans-serif" font-size="12.9" fill="#929292">200</text><text transform="translate(67.1 348.6) rotate(-90) scale(0.88 1)" text-anchor="middle" letter-spacing="0.6" font-family="Liberation Sans,sans-serif" font-size="12.9" fill="#929292">180</text><text transform="translate(67.1 443.6) rotate(-90) scale(0.88 1)" text-anchor="middle" letter-spacing="0.6" font-family="Liberation Sans,sans-serif" font-size="12.9" fill="#929292">160</text><text transform="translate(67.1 537.6) rotate(-90) scale(0.88 1)" text-anchor="middle" letter-spacing="0.6" font-family="Liberation Sans,sans-serif" font-size="12.9" fill="#929292">140</text><text transform="translate(67.1 632.6) rotate(-90) scale(0.88 1)" text-anchor="middle" letter-spacing="0.6" font-family="Liberation Sans,sans-serif" font-size="12.9" fill="#929292">120</text><path d="M60 176.4 h2 M64 176.4 h2.1 M68.1 176.4 h1.9 M62.5 174 v2 M62.5 178.2 v1.9 M62.5 182.2 v1.8" stroke="#000" stroke-width="1.25"/><path d="M64.2 178.2 L67.6 181.6" stroke="#000" stroke-width="1.1"/><path d="M69 183 v-3.2 l-3.2 3.2z" fill="#000"/>
<ellipse cx="386" cy="449.5" rx="122.4" ry="116.4" fill="#00ff00" stroke="#0a1e0a" stroke-width="0.9"/><rect x="253" y="322" width="7" height="6.8" fill="#000"/><rect x="253" y="445.4" width="7" height="6.8" fill="#000"/><rect x="253" y="569" width="7" height="6.8" fill="#000"/><rect x="382.5" y="322" width="7" height="6.8" fill="#000"/><rect x="382.5" y="569" width="7" height="6.8" fill="#000"/><rect x="512.3" y="322" width="7" height="6.8" fill="#000"/><rect x="512.3" y="445.4" width="7" height="6.8" fill="#000"/><rect x="512.3" y="569" width="7" height="6.8" fill="#000"/><rect x="384.8" y="331.8" width="2.4" height="2.4" fill="#fff" stroke="#223" stroke-width="0.7"/><path d="M382.8 446.3 l6.4 6.4 M389.2 446.3 l-6.4 6.4" stroke="#f012f0" stroke-width="2.1"/>
<path d="M896.8 148.4 L906.8 158.2 M906.8 148.4 L896.8 158.2" stroke="#a8a8a8" stroke-width="1.6"/><path d="M892.4 170.2 L892.4 183.4 L895.4 180.8 L898 186.6 L900 185.7 L897.5 180 L901.8 179.6z" fill="#fff" stroke="#6e6e8c" stroke-width="1.1" stroke-linejoin="round"/><g transform="translate(903.4 182.2) scale(0.7 1)"><text x="0" y="0" font-family="Liberation Sans,sans-serif" font-size="17.6" font-weight="bold" fill="#66668a">?</text></g><path d="M898.6 174.2 h1 M908.6 170.8 h1 M909.4 175.6 h1 M893 183.6 h1 M897.4 187.6 h1.6" stroke="#111" stroke-width="1"/><path d="M894 253.8 v17" stroke="#222" stroke-width="1" stroke-dasharray="1 1"/><rect x="896.2" y="256.2" width="11.6" height="5.2" fill="#f6f6fa" stroke="#55557c" stroke-width="1.2"/><rect x="896.2" y="264" width="6.8" height="4.8" fill="#f6f6fa" stroke="#55557c" stroke-width="1.2"/><rect x="894.6" y="359" width="1.6" height="1.6" fill="#000"/><rect x="894.6" y="361.9" width="1.6" height="1.6" fill="#000"/><rect x="894.6" y="364.8" width="1.6" height="1.6" fill="#000"/><circle cx="901.8" cy="421.6" r="9.8" fill="none" stroke="#bdbdbd" stroke-width="1"/><path d="M895.5 421.6 h12.6 M901.8 415.3 v12.6" stroke="#b9b9b9" stroke-width="2.7"/><path d="M869.2 202.2 L873.7 197.4 L878.2 202.2" fill="none" stroke="#505050" stroke-width="1.9"/>
<path d="M917.5 147.2 h14" stroke="#9a9a9a" stroke-width="1.2" stroke-dasharray="1.4 2"/><path d="M922.2 154.8 v9.6 l5 -4.8z" fill="#000"/><path d="M917.2 185.6 L918.6 181.8 L925 175.4 L927.2 177.6 L920.8 184z" fill="#cbcbcb"/><path d="M923.6 174.4 L928.2 179" stroke="#bcbcbc" stroke-width="2"/><path d="M926 176.6 L929.4 172.6" stroke="#bcbcbc" stroke-width="3.4" stroke-linecap="round"/><circle cx="930" cy="172.4" r="2.1" fill="#bcbcbc"/><path d="M919.6 200.6 L925 194.6 L930.4 200.6" fill="none" stroke="#cacaca" stroke-width="2.1"/><path d="M915.4 210.6 L935.6 229.8 M935.6 210.6 L915.4 229.8" stroke="#222" stroke-width="0.9"/></svg>
<div class="a" style="left:52px;top:430.8px;width:283.2px;height:45.2px;box-sizing:border-box;background:#fff;border:1px solid #767676;box-shadow:2.5px 2.5px 3px rgba(0,0,0,.35);"></div>
<span class="t " style="left:138.4px;top:433.9px;font-size:15px;color:#444;font-weight:bold;letter-spacing:-0.1px;">(F7)</span>
<svg width="936" height="637" viewBox="0 0 936 637"><path d="M1.5 426 C8 424.5 13 422 21 421.6 L78.5 421.3" fill="none" stroke="#ff1e1e" stroke-width="2.3" stroke-linecap="round"/></svg>
<svg class="cjk" width="936" height="637" viewBox="0 0 936 637">
<text x="210" y="18.68" font-size="16" fill="#000">未命名</text>
<text x="27.4" y="48.28" font-size="16" fill="#000">文件</text>
<text x="99.2" y="48.28" font-size="16" fill="#000">编辑</text>
<text x="171" y="48.28" font-size="16" fill="#000">视图</text>
<text x="244.1" y="48.28" font-size="16" fill="#000">布局</text>
<text x="315.1" y="48.28" font-size="16" fill="#000">排列</text>
<text x="388.5" y="48.28" font-size="16" fill="#000">效果</text>
<text x="462.3" y="48.28" font-size="16" fill="#000">位图</text>
<text x="535.1" y="48.28" font-size="16" fill="#000">文本</text>
<text x="607.7" y="48.28" font-size="16" fill="#000">表格</text>
<text x="680.3" y="48.28" font-size="16" fill="#000">工具</text>
<text x="755.1" y="48.28" font-size="16" fill="#000">窗口</text>
<text x="833.6" y="48.28" font-size="16" fill="#000">帮助</text>
<text x="820" y="80.08" font-size="16" fill="#000">贴齐</text>
<text x="27.6" y="480.44" font-size="15.5" font-weight="500" fill="#3c3c50">字</text>
<text x="56.2" y="159.68" font-size="16" fill="#000">欢迎屏幕</text>
<text x="148.2" y="159.68" font-size="16" fill="#000">未命名</text>
<text x="855.4" y="178.64" font-size="13" fill="#8e8e8e">毫米</text>
<g transform="translate(909.00 193.00) rotate(90)"><text x="0" y="14.08" font-size="16" fill="#000">提示</text></g>
<g transform="translate(909.00 277.50) rotate(90)"><text x="0" y="14.08" font-size="16" fill="#000">对齐与分布</text></g>
<text x="58.3" y="448.5" font-size="15" font-weight="bold" fill="#444">椭圆形工具</text>
<text x="58" y="469.3" font-size="15" fill="#333">在绘图窗口拖动工具绘制圆形和椭圆形。</text>
</svg>
</div></body></html>
